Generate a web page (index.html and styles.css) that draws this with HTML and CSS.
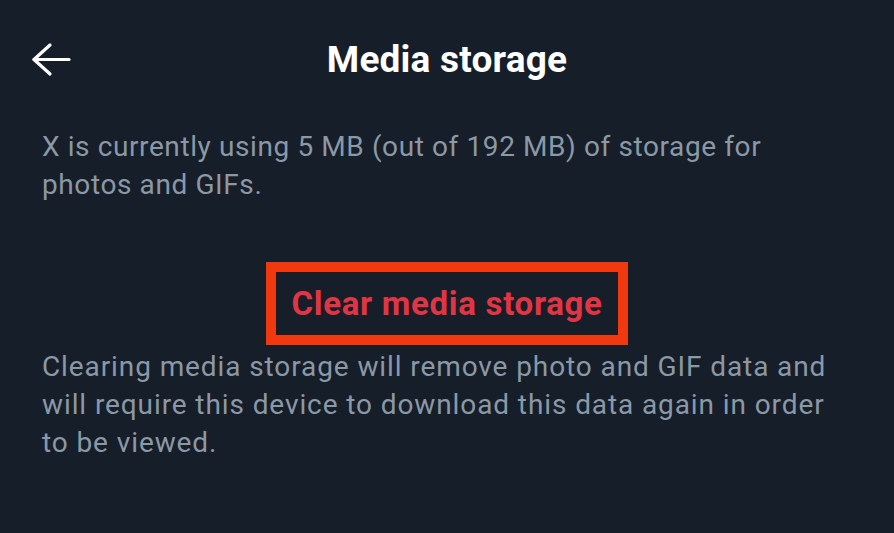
FILE: index.html
```html
<!DOCTYPE html>
<html lang="en">
<head>
<meta charset="utf-8">
<title>Media storage</title>
<link rel="stylesheet" href="styles.css">
</head>
<body>
<div class="screen">
  <header class="topbar">
    <div class="back">
      <svg class="back-icon" width="44" height="36" viewBox="0 0 44 36" fill="none" stroke="#ffffff" stroke-width="3.2" stroke-linecap="round" stroke-linejoin="round">
        <path d="M5 18.5 H40"/>
        <path d="M21 4 L5 18.5 L21 33"/>
      </svg>
    </div>
    <h1 class="title">Media storage</h1>
    <div class="spacer"></div>
  </header>
  <main class="content">
    <p class="info">X is currently using 5 MB (out of 192 MB) of storage for photos and GIFs.</p>
    <div class="action">
      <span class="clear-btn">Clear media storage</span>
    </div>
    <p class="info note">Clearing media storage will remove photo and GIF data and will require this device to download this data again in order to be viewed.</p>
  </main>
</div>
</body>
</html>
```

FILE: styles.css
```css
html, body {
  margin: 0;
  padding: 0;
  background: #161e29;
}
body {
  font-family: Roboto, "Liberation Sans", Arial, sans-serif;
  width: 894px;
  height: 533px;
  overflow: hidden;
}
.screen {
  display: flex;
  flex-direction: column;
}
.topbar {
  display: grid;
  grid-template-columns: 1fr auto 1fr;
  align-items: center;
  height: 118px;
}
.back {
  padding-left: 29px;
  display: flex;
  align-items: center;
}
.back-icon {
  display: block;
}
.title {
  margin: 0;
  color: #ffffff;
  font-size: 37px;
  font-weight: 700;
  letter-spacing: 0.2px;
}
.content {
  padding: 10px 42px 0;
}
.info {
  margin: 0;
  color: #8b98a5;
  font-size: 28px;
  line-height: 38px;
  letter-spacing: 0.6px;
}
.action {
  display: flex;
  justify-content: center;
  margin-top: 58px;
}
.clear-btn {
  display: inline-flex;
  align-items: center;
  justify-content: center;
  box-sizing: border-box;
  width: 362px;
  height: 83px;
  border: 10px solid #f2380f;
  color: #e23543;
  font-size: 33px;
  font-weight: 700;
  letter-spacing: 0.7px;
}
.note {
  margin-top: 3px;
  letter-spacing: 0.9px;
}
```
